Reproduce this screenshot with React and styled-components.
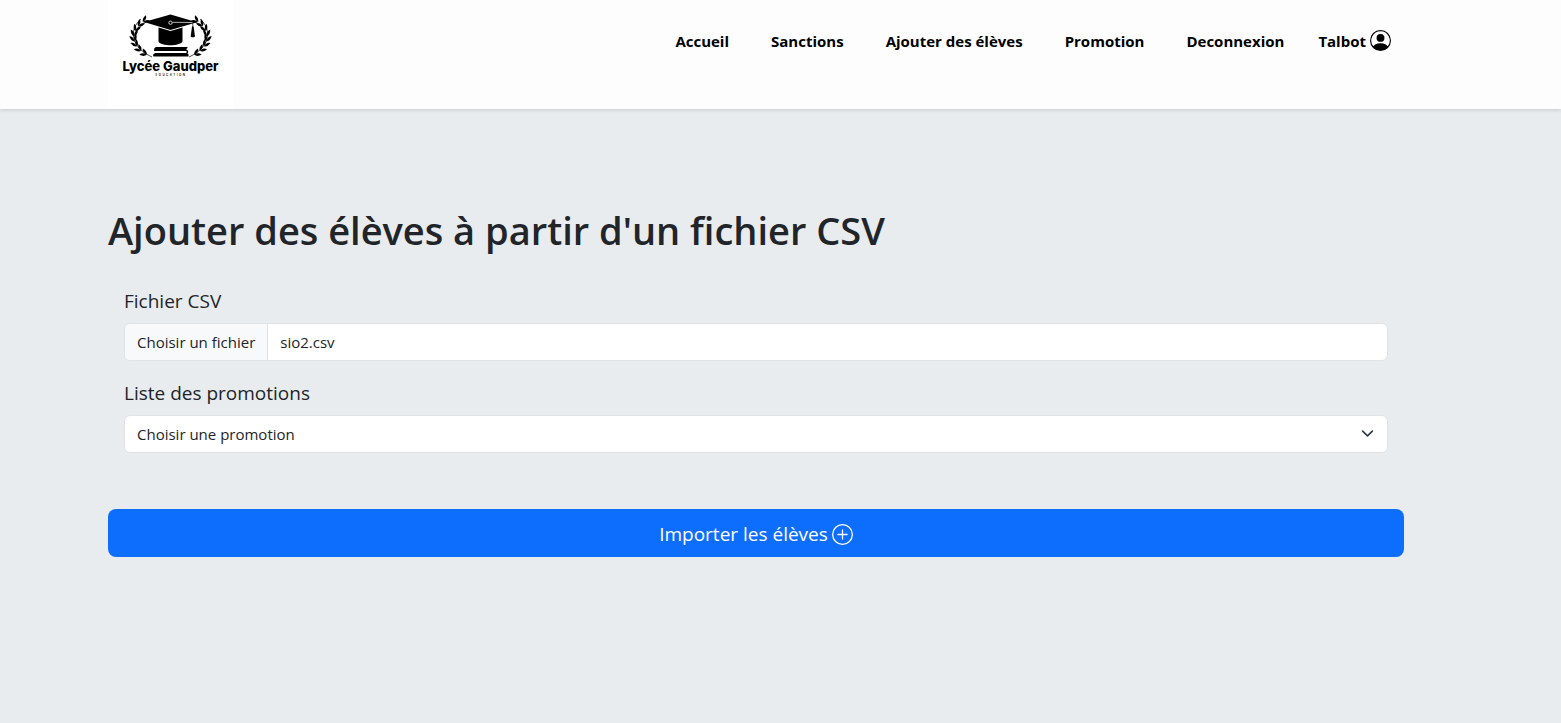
import React, { useState } from "react";
import styled, { createGlobalStyle } from "styled-components";
import { BsPersonCircle, BsPlusCircle } from "react-icons/bs";

const GlobalStyle = createGlobalStyle`
  *, *::before, *::after { box-sizing: border-box; }
  body {
    margin: 0;
    background: #e8ecef;
    color: #212529;
    font-family: "Open Sans", "Noto Sans", sans-serif;
    font-size: 15px;
    line-height: 24px;
  }
`;

const Header = styled.header`
  display: flex;
  justify-content: space-between;
  align-items: flex-start;
  padding: 0 170px 0 108px;
  background: #fdfdfd;
  box-shadow: 0 1px 4px rgba(0, 0, 0, 0.14);
`;

const LogoLink = styled.a`
  display: block;
  background: #ffffff;
  color: #000000;
  svg { display: block; }
`;

const Nav = styled.nav`
  display: flex;
  align-items: center;
  gap: 34px;
  padding-top: 28px;
`;

const NavList = styled.ul`
  display: flex;
  gap: 42px;
  margin: 0;
  padding: 0;
  list-style: none;
`;

const NavLink = styled.a`
  display: flex;
  align-items: center;
  gap: 4px;
  color: #000000;
  font-weight: 700;
  line-height: 26px;
  text-decoration: none;
  white-space: nowrap;
  svg { margin-bottom: 2px; }
`;

const Main = styled.main`
  padding: 98px 157px 40px 108px;
`;

const Title = styled.h1`
  margin: 0 0 32px;
  font-size: 38px;
  font-weight: 600;
  line-height: 46px;
`;

const Fields = styled.div`
  display: flex;
  flex-direction: column;
  gap: 16px;
  padding: 0 16px;
  margin-bottom: 56px;
`;

const Field = styled.div`
  display: flex;
  flex-direction: column;
  gap: 6px;
`;

const Label = styled.label`
  font-size: 19px;
  line-height: 32px;
`;

const FileControl = styled.label`
  position: relative;
  display: flex;
  height: 38px;
  overflow: hidden;
  background: #ffffff;
  border: 1px solid #dee2e6;
  border-radius: 6px;
  line-height: 36px;
  cursor: pointer;
`;

const FileInput = styled.input`
  position: absolute;
  inset: 0;
  width: 100%;
  opacity: 0;
  cursor: pointer;
`;

const FileButton = styled.span`
  padding: 0 12px;
  background: #f8f9fa;
  border-right: 1px solid #dee2e6;
`;

const FileName = styled.span`
  padding: 0 12px;
`;

const SelectWrap = styled.div`
  position: relative;
  display: flex;
  svg {
    position: absolute;
    right: 14px;
    top: 12px;
    pointer-events: none;
  }
`;

const Select = styled.select`
  appearance: none;
  width: 100%;
  height: 38px;
  padding: 0 36px 0 12px;
  background: #ffffff;
  border: 1px solid #dee2e6;
  border-radius: 6px;
  color: inherit;
  font: inherit;
`;

const SubmitButton = styled.button`
  display: flex;
  align-items: center;
  justify-content: center;
  gap: 4px;
  width: 100%;
  height: 48px;
  padding: 2px 16px 0;
  border: 0;
  border-radius: 8px;
  background: #0d6efd;
  color: #ffffff;
  font: inherit;
  font-size: 19px;
  cursor: pointer;
`;

const LEAF_ANGLES = [221, 208, 195, 182, 169, 156, 143, 130];

// A branch that follows the left half of an ellipse, with a pair of leaves at each angle.
function Laurel() {
  return (
    <g>
      <path d="M33 19C21 29 22 47 44 57" fill="none" stroke="currentColor" strokeWidth="0.7" />
      {LEAF_ANGLES.map((deg) => {
        const a = (deg * Math.PI) / 180;
        const x = 62 + 36 * Math.cos(a);
        const y = 37 + 23 * Math.sin(a);
        const heading = (Math.atan2(23 * Math.cos(a), -36 * Math.sin(a)) * 180) / Math.PI;
        return (
          <g key={deg} transform={`translate(${x} ${y}) rotate(${heading})`}>
            <path d="M0 0Q1.500-3.600 6.500-3.600Q5.200 0.400 0 0Z" />
            <path d="M0 0Q1.500 3.600 6.500 3.600Q5.200-0.400 0 0Z" />
          </g>
        );
      })}
    </g>
  );
}

function Logo() {
  return (
    <svg width="125" height="109" viewBox="0 0 125 109" fill="currentColor" role="img" aria-label="Lycée Gaudper Education">
      <Laurel />
      <g transform="translate(125 0) scale(-1 1)"><Laurel /></g>
      <path d="M50.500 27.500L62.500 31L74.500 27.500V41.500C72 46.500 53 46.500 50.500 41.500Z" />
      <path d="M36 22L62.500 14.500L89 22.300L62.500 30Z" />
      <circle cx="62.500" cy="22.700" r="1.700" fill="none" stroke="#fff" strokeWidth="0.800" />
      <path d="M64.500 22.300L84.500 22.500" stroke="#fff" strokeWidth="0.700" />
      <path d="M84.800 23V28" stroke="currentColor" strokeWidth="0.700" />
      <path d="M84 26.500H85.600L87 36.500Q84.800 38.200 82.700 36.500Z" />
      <path d="M48 47H79.500V48Q78 48.500 78.500 50H46Q46 47.500 48 47Z" />
      <path d="M46 50H79.500Q81 52 79.500 54H46.500V53H78.500V51H46Z" />
      <path d="M45.500 54H80.500V56.500H45.500Q44.500 55.200 45.500 54Z" />
      <text x="62.500" y="71" textAnchor="middle" fontFamily="Inter, sans-serif" fontWeight="800" fontSize="13">Lycée Gaudper</text>
      <text x="63" y="76" textAnchor="middle" fontFamily="Inter, sans-serif" fontWeight="600" fontSize="3" letterSpacing="1.5">EDUCATION</text>
    </svg>
  );
}

const LINKS = ["Accueil", "Sanctions", "Ajouter des élèves", "Promotion", "Deconnexion"];

export default function App() {
  const [fileName, setFileName] = useState("sio2.csv");

  return (
    <>
      <GlobalStyle />
      <Header>
        <LogoLink href="#accueil"><Logo /></LogoLink>
        <Nav>
          <NavList>
            {LINKS.map((label) => (
              <li key={label}><NavLink href="#">{label}</NavLink></li>
            ))}
          </NavList>
          <NavLink href="#profil">Talbot <BsPersonCircle size={21} /></NavLink>
        </Nav>
      </Header>
      <Main>
        <Title>Ajouter des élèves à partir d'un fichier CSV</Title>
        <form onSubmit={(e) => e.preventDefault()}>
          <Fields>
            <Field>
              <Label htmlFor="csv">Fichier CSV</Label>
              <FileControl>
                <FileInput
                  id="csv"
                  type="file"
                  accept=".csv"
                  onChange={(e) => e.target.files[0] && setFileName(e.target.files[0].name)}
                />
                <FileButton>Choisir un fichier</FileButton>
                <FileName>{fileName}</FileName>
              </FileControl>
            </Field>
            <Field>
              <Label htmlFor="promotion">Liste des promotions</Label>
              <SelectWrap>
                <Select id="promotion" defaultValue="">
                  <option value="">Choisir une promotion</option>
                </Select>
                <svg width="13" height="13" viewBox="0 0 16 16" fill="none" stroke="#343a40" strokeWidth="2" strokeLinecap="round" strokeLinejoin="round" aria-hidden="true">
                  <path d="m2 5 6 6 6-6" />
                </svg>
              </SelectWrap>
            </Field>
          </Fields>
          <SubmitButton type="submit">Importer les élèves <BsPlusCircle size={21} /></SubmitButton>
        </form>
      </Main>
    </>
  );
}
